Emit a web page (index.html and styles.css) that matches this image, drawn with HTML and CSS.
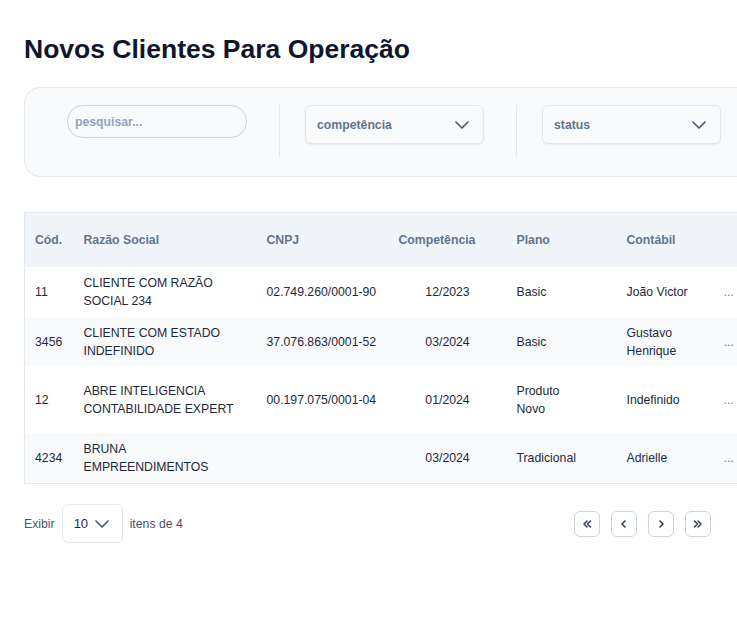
FILE: index.html
```html
<!DOCTYPE html>
<html lang="pt-BR">
<head>
<meta charset="utf-8">
<title>Novos Clientes Para Operação</title>
<link rel="stylesheet" href="styles.css">
</head>
<body>
<main class="page">
  <h1 class="title">Novos Clientes Para Operação</h1>

  <section class="filters">
    <input class="search" type="text" placeholder="pesquisar...">
    <span class="divider"></span>
    <div class="select">
      <span>competência</span>
      <svg class="chev" width="14" height="8" viewBox="0 0 14 8"><path d="M1 1l6 6 6-6" fill="none" stroke="#475569" stroke-width="1.6" stroke-linecap="round" stroke-linejoin="round"/></svg>
    </div>
    <span class="divider"></span>
    <div class="select">
      <span>status</span>
      <svg class="chev" width="14" height="8" viewBox="0 0 14 8"><path d="M1 1l6 6 6-6" fill="none" stroke="#475569" stroke-width="1.6" stroke-linecap="round" stroke-linejoin="round"/></svg>
    </div>
  </section>

  <table class="grid">
    <colgroup>
      <col class="c-cod"><col class="c-razao"><col class="c-cnpj"><col class="c-comp"><col class="c-plano"><col class="c-cont"><col class="c-act">
    </colgroup>
    <thead>
      <tr>
        <th>Cód.</th><th>Razão Social</th><th>CNPJ</th><th>Competência</th><th>Plano</th><th>Contábil</th><th></th>
      </tr>
    </thead>
    <tbody>
      <tr class="r1">
        <td>11</td><td>CLIENTE COM RAZÃO SOCIAL 234</td><td>02.749.260/0001-90</td><td class="center">12/2023</td><td class="plano">Basic</td><td>João Victor</td><td class="dots">...</td>
      </tr>
      <tr class="r2 alt">
        <td>3456</td><td>CLIENTE COM ESTADO INDEFINIDO</td><td>37.076.863/0001-52</td><td class="center">03/2024</td><td class="plano">Basic</td><td>Gustavo Henrique</td><td class="dots">...</td>
      </tr>
      <tr class="r3">
        <td>12</td><td>ABRE INTELIGENCIA CONTABILIDADE EXPERT</td><td>00.197.075/0001-04</td><td class="center">01/2024</td><td class="plano">Produto Novo</td><td>Indefinido</td><td class="dots">...</td>
      </tr>
      <tr class="r4 alt">
        <td>4234</td><td>BRUNA EMPREENDIMENTOS</td><td></td><td class="center">03/2024</td><td class="plano">Tradicional</td><td>Adrielle</td><td class="dots">...</td>
      </tr>
    </tbody>
  </table>

  <footer class="footer">
    <div class="per-page">
      <span class="muted">Exibir</span>
      <div class="size">
        <span>10</span>
        <svg width="14" height="8" viewBox="0 0 14 8"><path d="M1 1l6 6 6-6" fill="none" stroke="#475569" stroke-width="1.6" stroke-linecap="round" stroke-linejoin="round"/></svg>
      </div>
      <span class="muted">itens de 4</span>
    </div>
    <nav class="pager">
      <button class="pbtn" aria-label="primeira"><svg width="10" height="10" viewBox="0 0 10 10"><path d="M5 2L2 5l3 3M8.5 2l-3 3 3 3" fill="none" stroke="#334155" stroke-width="1.6" stroke-linecap="round" stroke-linejoin="round"/></svg></button>
      <button class="pbtn" aria-label="anterior"><svg width="10" height="10" viewBox="0 0 10 10"><path d="M6 2L3 5l3 3" fill="none" stroke="#334155" stroke-width="1.6" stroke-linecap="round" stroke-linejoin="round"/></svg></button>
      <button class="pbtn" aria-label="próxima"><svg width="10" height="10" viewBox="0 0 10 10"><path d="M4 2l3 3-3 3" fill="none" stroke="#334155" stroke-width="1.6" stroke-linecap="round" stroke-linejoin="round"/></svg></button>
      <button class="pbtn" aria-label="última"><svg width="10" height="10" viewBox="0 0 10 10"><path d="M1.5 2l3 3-3 3M5 2l3 3-3 3" fill="none" stroke="#334155" stroke-width="1.6" stroke-linecap="round" stroke-linejoin="round"/></svg></button>
    </nav>
  </footer>
</main>
</body>
</html>
```

FILE: styles.css
```css
html, body {
  margin: 0;
  padding: 0;
  background: #ffffff;
  overflow: hidden;
}

body {
  font-family: "Liberation Sans", Arial, sans-serif;
  color: #1e293b;
}

.page {
  padding: 34px 0 0 24px;
  width: 780px;
}

.title {
  margin: 0;
  font-size: 26.5px;
  line-height: 31px;
  font-weight: 700;
  color: #0f172a;
}

.filters {
  margin-top: 22px;
  display: flex;
  align-items: flex-start;
  padding: 17px 0 19px 42px;
  background: #f8fafc;
  border: 1px solid #e2e8f0;
  border-radius: 16px;
}

.search {
  box-sizing: border-box;
  width: 180px;
  height: 33px;
  margin: 0;
  padding: 0 7px;
  border: 1px solid #cbd5e1;
  border-radius: 16px;
  background: #f8fafc;
  font-family: "Liberation Sans", Arial, sans-serif;
  font-size: 12.25px;
  font-weight: 700;
  color: #334155;
  outline: none;
}

.search::placeholder {
  color: #94a3b8;
  font-weight: 700;
}

.divider {
  width: 1px;
  height: 52px;
  background: #e2e8f0;
  margin: 0 25px 0 32px;
}

.select {
  box-sizing: border-box;
  width: 179px;
  height: 39px;
  display: flex;
  align-items: center;
  justify-content: space-between;
  padding: 0 14px 0 11px;
  background: #f9fafb;
  border: 1px solid #e5e7eb;
  border-radius: 6px;
  box-shadow: 0 1px 2px rgba(15, 23, 42, 0.06);
  font-size: 12.25px;
  font-weight: 700;
  color: #64748b;
}

.grid {
  margin-top: 35px;
  border-collapse: collapse;
  table-layout: fixed;
  width: 760px;
  border: 1px solid #e2e8f0;
  font-size: 12.25px;
  line-height: 18px;
}

.c-cod { width: 49px; }
.c-razao { width: 183px; }
.c-cnpj { width: 132px; }
.c-comp { width: 118px; }
.c-plano { width: 110px; }
.c-cont { width: 97px; }
.c-act { width: 71px; }

.grid th {
  height: 54px;
  padding: 0 10px;
  background: #f1f5f9;
  text-align: left;
  font-weight: 700;
  color: #64748b;
  white-space: nowrap;
}

.grid td {
  padding: 0 12px 0 10px;
  vertical-align: middle;
  color: #1e293b;
}

.grid tbody tr { background: #ffffff; }
.grid tbody tr.alt { background: #f8fafc; }

.r1 td { height: 50px; }
.r2 td { height: 49px; }
.r3 td { height: 67px; }
.r4 td { height: 50px; }

.grid td.center { text-align: center; padding: 0 11px; }
.grid td.plano { padding-right: 30px; }
.grid td.dots { color: #64748b; }

.footer {
  width: 687px;
  margin-top: 20px;
  display: flex;
  align-items: center;
  justify-content: space-between;
}

.per-page {
  display: flex;
  align-items: center;
  gap: 7px;
  font-size: 12.25px;
}

.muted { color: #475569; }

.size {
  box-sizing: border-box;
  width: 61px;
  height: 39px;
  display: flex;
  align-items: center;
  justify-content: space-between;
  padding: 0 13px 0 11px;
  border: 1px solid #e2e8f0;
  border-radius: 6px;
  background: #ffffff;
  color: #1e293b;
  font-size: 13px;
}

.pager {
  display: flex;
  gap: 11px;
}

.pbtn {
  box-sizing: border-box;
  width: 26px;
  height: 26px;
  padding: 0;
  display: flex;
  align-items: center;
  justify-content: center;
  background: #ffffff;
  border: 1px solid #cbd5e1;
  border-radius: 6px;
}
```
